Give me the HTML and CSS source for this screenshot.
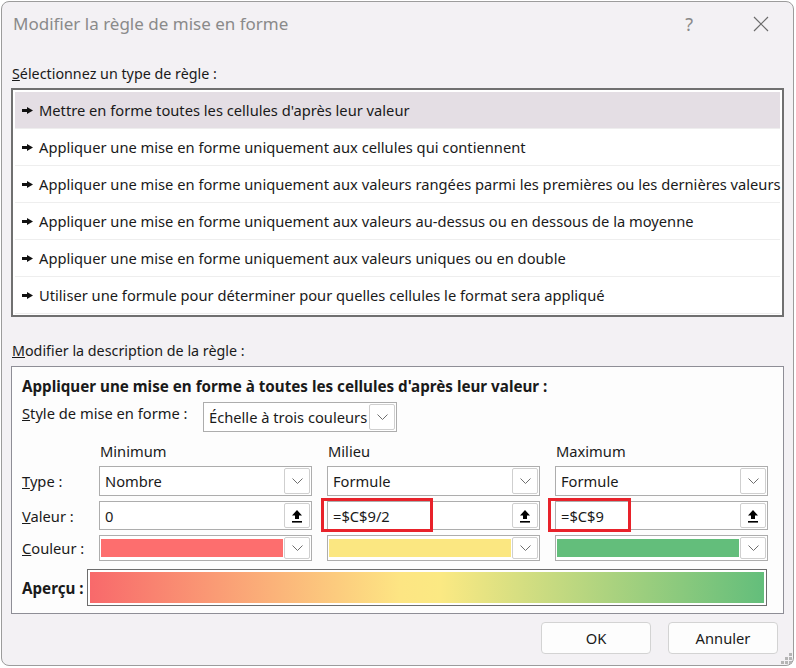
FILE: index.html
```html
<!DOCTYPE html>
<html lang="fr">
  <head>
    <meta charset="UTF-8" />
    <title>Modifier la règle de mise en forme</title>
    <link rel="stylesheet" href="styles.css">
  </head>
  <body>
    <div class="dialog">
      <div class="titlebar">
        <span class="title">Modifier la règle de mise en forme</span>
        <span class="help">?</span>
        <svg class="close" width="16" height="16" viewBox="0 0 16 16">
          <path d="M1 1 L15 15 M15 1 L1 15" stroke="#6b6b6b" stroke-width="1.2" fill="none"/>
        </svg>
      </div>

      <div class="content">
        <div class="section-label"><u>S</u>électionnez un type de règle :</div>
        <ul class="rule-list">
          <li class="selected"><svg class="bullet" width="11" height="7" viewBox="0 0 11 7"><rect x="0" y="2" width="6" height="3" fill="#111"/><polygon points="5,0 11,3.5 5,7" fill="#111"/></svg>Mettre en forme toutes les cellules d'après leur valeur</li>
          <li><svg class="bullet" width="11" height="7" viewBox="0 0 11 7"><rect x="0" y="2" width="6" height="3" fill="#111"/><polygon points="5,0 11,3.5 5,7" fill="#111"/></svg>Appliquer une mise en forme uniquement aux cellules qui contiennent</li>
          <li><svg class="bullet" width="11" height="7" viewBox="0 0 11 7"><rect x="0" y="2" width="6" height="3" fill="#111"/><polygon points="5,0 11,3.5 5,7" fill="#111"/></svg>Appliquer une mise en forme uniquement aux valeurs rangées parmi les premières ou les dernières valeurs</li>
          <li><svg class="bullet" width="11" height="7" viewBox="0 0 11 7"><rect x="0" y="2" width="6" height="3" fill="#111"/><polygon points="5,0 11,3.5 5,7" fill="#111"/></svg>Appliquer une mise en forme uniquement aux valeurs au-dessus ou en dessous de la moyenne</li>
          <li><svg class="bullet" width="11" height="7" viewBox="0 0 11 7"><rect x="0" y="2" width="6" height="3" fill="#111"/><polygon points="5,0 11,3.5 5,7" fill="#111"/></svg>Appliquer une mise en forme uniquement aux valeurs uniques ou en double</li>
          <li><svg class="bullet" width="11" height="7" viewBox="0 0 11 7"><rect x="0" y="2" width="6" height="3" fill="#111"/><polygon points="5,0 11,3.5 5,7" fill="#111"/></svg>Utiliser une formule pour déterminer pour quelles cellules le format sera appliqué</li>
        </ul>

        <div class="section-label second"><u>M</u>odifier la description de la règle :</div>
        <div class="desc-box">
          <div class="desc-title">Appliquer une mise en forme à toutes les cellules d'après leur valeur :</div>
          <div class="style-row">
            <span class="style-label"><u>S</u>tyle de mise en forme :</span>
            <div class="combo style-combo">
              <span class="combo-text">Échelle à trois couleurs</span>
              <span class="drop-btn"><svg width="11" height="6" viewBox="0 0 11 6"><polyline points="0.5,0.5 5.5,5.5 10.5,0.5" fill="none" stroke="#6e6e6e" stroke-width="1"/></svg></span>
            </div>
          </div>

          <div class="grid">
            <span></span>
            <span class="col-head">Minimum</span>
            <span class="col-head">Milieu</span>
            <span class="col-head">Maximum</span>

            <span class="row-label"><u>T</u>ype :</span>
            <div class="combo"><span class="combo-text">Nombre</span><span class="drop-btn"><svg width="11" height="6" viewBox="0 0 11 6"><polyline points="0.5,0.5 5.5,5.5 10.5,0.5" fill="none" stroke="#6e6e6e" stroke-width="1"/></svg></span></div>
            <div class="combo"><span class="combo-text">Formule</span><span class="drop-btn"><svg width="11" height="6" viewBox="0 0 11 6"><polyline points="0.5,0.5 5.5,5.5 10.5,0.5" fill="none" stroke="#6e6e6e" stroke-width="1"/></svg></span></div>
            <div class="combo"><span class="combo-text">Formule</span><span class="drop-btn"><svg width="11" height="6" viewBox="0 0 11 6"><polyline points="0.5,0.5 5.5,5.5 10.5,0.5" fill="none" stroke="#6e6e6e" stroke-width="1"/></svg></span></div>

            <span class="row-label"><u>V</u>aleur :</span>
            <div class="combo value"><span class="combo-text">0</span><span class="ref-btn"><svg width="12" height="14" viewBox="0 0 12 14"><polygon points="6,1 11,6.5 8,6.5 8,10 4,10 4,6.5 1,6.5" fill="#000"/><rect x="1" y="12" width="10" height="1.6" fill="#000"/></svg></span></div>
            <div class="combo value"><span class="combo-text">=$C$9/2</span><span class="ref-btn"><svg width="12" height="14" viewBox="0 0 12 14"><polygon points="6,1 11,6.5 8,6.5 8,10 4,10 4,6.5 1,6.5" fill="#000"/><rect x="1" y="12" width="10" height="1.6" fill="#000"/></svg></span><span class="mark mark-mid"></span></div>
            <div class="combo value"><span class="combo-text">=$C$9</span><span class="ref-btn"><svg width="12" height="14" viewBox="0 0 12 14"><polygon points="6,1 11,6.5 8,6.5 8,10 4,10 4,6.5 1,6.5" fill="#000"/><rect x="1" y="12" width="10" height="1.6" fill="#000"/></svg></span><span class="mark mark-max"></span></div>

            <span class="row-label"><u>C</u>ouleur :</span>
            <div class="combo color"><span class="swatch red"></span><span class="drop-btn"><svg width="11" height="6" viewBox="0 0 11 6"><polyline points="0.5,0.5 5.5,5.5 10.5,0.5" fill="none" stroke="#6e6e6e" stroke-width="1"/></svg></span></div>
            <div class="combo color"><span class="swatch yellow"></span><span class="drop-btn"><svg width="11" height="6" viewBox="0 0 11 6"><polyline points="0.5,0.5 5.5,5.5 10.5,0.5" fill="none" stroke="#6e6e6e" stroke-width="1"/></svg></span></div>
            <div class="combo color"><span class="swatch green"></span><span class="drop-btn"><svg width="11" height="6" viewBox="0 0 11 6"><polyline points="0.5,0.5 5.5,5.5 10.5,0.5" fill="none" stroke="#6e6e6e" stroke-width="1"/></svg></span></div>
          </div>

          <div class="preview-row">
            <span class="preview-label">Aperçu :</span>
            <div class="preview-bar"><div class="preview-fill"></div></div>
          </div>
        </div>

        <div class="buttons">
          <button class="btn">OK</button>
          <button class="btn">Annuler</button>
        </div>
      </div>
      <svg class="grip" width="11" height="11" viewBox="0 0 11 11">
        <rect x="8" y="0" width="3" height="3" fill="#b5b5b5"/>
        <rect x="4" y="4" width="3" height="3" fill="#b5b5b5"/>
        <rect x="8" y="4" width="3" height="3" fill="#b5b5b5"/>
        <rect x="0" y="8" width="3" height="3" fill="#b5b5b5"/>
        <rect x="4" y="8" width="3" height="3" fill="#b5b5b5"/>
        <rect x="8" y="8" width="3" height="3" fill="#b5b5b5"/>
      </svg>
    </div>
  </body>
</html>
```

FILE: styles.css
```css
* {
  box-sizing: border-box;
}
body {
  margin: 0;
  background-color: #ffffff;
  font-family: "Noto Sans", "Open Sans", sans-serif;
  font-size: 14.7px;
  color: #1a1a1a;
}
.dialog {
  position: relative;
  width: 793px;
  height: 665px;
  margin: 1px 0 0 1px;
  border: 1px solid #9c9c9c;
  border-radius: 8px;
  background-color: #f3f1f4;
}
.titlebar {
  display: flex;
  align-items: center;
  height: 43px;
  padding-left: 11px;
}
.title {
  flex: 1;
  font-size: 17px;
  color: #8a8a8a;
}
.help {
  font-size: 18px;
  color: #8a8a8a;
  margin-right: 60px;
}
.close {
  margin-right: 24px;
}
.content {
  padding: 0 9px 0 9px;
}
.section-label {
  height: 20px;
  line-height: 20px;
  margin-top: 19px;
  padding-left: 1px;
  font-size: 14.3px;
}
.section-label.second {
  margin-top: 24px;
}
.rule-list {
  list-style: none;
  margin: 4px 0 0 0;
  padding: 2px 2px 1px 2px;
  height: 229px;
  border: 2px solid #707070;
  background-color: #ffffff;
}
.rule-list li {
  display: flex;
  align-items: center;
  height: 37px;
  padding-left: 7px;
  border-bottom: 1px solid #eeeeee;
  font-size: 14.7px;
  white-space: nowrap;
}
.rule-list li.selected {
  background-color: #e4dee4;
}
.bullet {
  margin-right: 6px;
  flex-shrink: 0;
}
.desc-box {
  margin-top: 5px;
  height: 248px;
  border: 1px solid #8e8e96;
  background-color: #fdfdfd;
  padding: 9px 16px 0 10px;
}
.desc-title {
  font-weight: bold;
  font-size: 15.2px;
  height: 20px;
  line-height: 20px;
}
.style-row {
  display: flex;
  align-items: center;
  margin-top: 6px;
}
.style-label {
  width: 181px;
  margin-top: -8px;
}
.combo {
  position: relative;
  display: flex;
  align-items: center;
  height: 30px;
  border: 1px solid #adadad;
  background-color: #ffffff;
  padding: 0 1px 0 5px;
}
.style-combo {
  width: 194px;
}
.combo-text {
  flex: 1;
  white-space: nowrap;
}
.drop-btn,
.ref-btn {
  display: flex;
  align-items: center;
  justify-content: center;
  width: 26px;
  height: 26px;
  border: 1px solid #cfcfcf;
  border-radius: 2px;
  background-color: #ffffff;
}
.grid {
  display: grid;
  grid-template-columns: 62px 213px 213px 213px;
  grid-template-rows: 20px 30px 29px 26px;
  column-gap: 15px;
  row-gap: 5px;
  margin-top: 9px;
}
.grid .col-head {
  padding-left: 1px;
  line-height: 20px;
}
.row-label {
  align-self: center;
  white-space: nowrap;
}
.grid .combo {
  height: auto;
}
.combo.value .ref-btn {
  height: 25px;
}
.combo.color {
  padding-left: 1px;
}
.combo.color .drop-btn {
  height: 22px;
}
.swatch {
  flex: 1;
  height: 18px;
  margin-right: 1px;
}
.swatch.red {
  background-color: #fd6e6e;
}
.swatch.yellow {
  background-color: #fbe781;
}
.swatch.green {
  background-color: #63be7b;
}
.mark {
  position: absolute;
  top: -4px;
  height: 34px;
  border: 3px solid #e8222a;
}
.mark-mid {
  left: -7px;
  width: 112px;
}
.mark-max {
  left: -8px;
  width: 83px;
}
.preview-row {
  display: flex;
  align-items: center;
  margin-top: 8px;
}
.preview-label {
  width: 65px;
  font-weight: bold;
  font-size: 15.2px;
}
.preview-bar {
  width: 681px;
  height: 37px;
  border: 1px solid #6d6d6d;
  padding: 2px;
  background-color: #ffffff;
}
.preview-fill {
  height: 100%;
  background: linear-gradient(to right, #f8696b 0%, #fde583 46%, #fbe983 52%, #63be7b 100%);
}
.buttons {
  display: flex;
  justify-content: flex-end;
  gap: 17px;
  margin-top: 8px;
  padding-right: 6px;
}
.btn {
  width: 110px;
  height: 32px;
  border: 1px solid #d3d3d3;
  border-radius: 4px;
  background-color: #fdfdfd;
  font-family: inherit;
  font-size: 14.7px;
  color: #1a1a1a;
}
.grip {
  position: absolute;
  right: 1px;
  bottom: 1px;
}
```
